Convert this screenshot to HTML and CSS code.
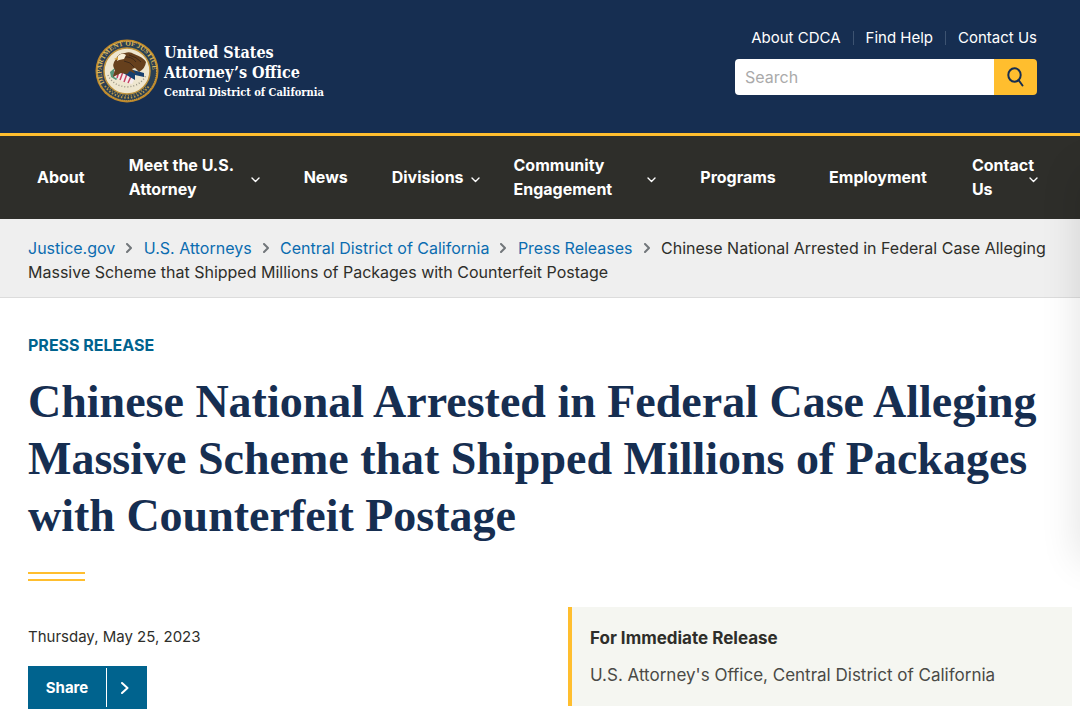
FILE: index.html
```html
<!DOCTYPE html>
<html lang="en">
<head>
  <meta charset="UTF-8">
  <meta name="viewport" content="width=device-width, initial-scale=1">
  <title>Central District of California | Press Release</title>
  <link rel="stylesheet" href="styles.css">
</head>
<body>
  <header class="header">
    <a class="logo" href="#">
      <svg class="seal" viewBox="0 0 64 64" aria-hidden="true">
        <defs>
          <path id="ring-top" d="M9.500 44A25.500 25.500 0 1 1 54.500 44"/>
        </defs>
        <circle cx="32" cy="32" r="31.500" fill="#c08a2b"/>
        <circle cx="32" cy="32" r="29.500" fill="#2b4053" stroke="#dcaa45" stroke-width="1" stroke-dasharray="1 1"/>
        <text class="seal-text"><textPath href="#ring-top">DEPARTMENT OF JUSTICE</textPath></text>
        <path d="M10 47A26.500 26.500 0 0 0 54 47" fill="none" stroke="#b99849" stroke-width="2" stroke-dasharray="1.500 1.800"/>
        <path d="M13 48A25 25 0 0 0 51 48" fill="none" stroke="#ab8b42" stroke-width="1.500" stroke-dasharray="1 1.800"/>
        <circle cx="32" cy="32" r="23" fill="#eee6cf" stroke="#c1943c" stroke-width="1.500"/>
        <path d="M13 36Q18 47 32 48Q46 47 51 36" fill="none" stroke="#9b9686" stroke-width="1.500" stroke-dasharray="1 2"/>
        <path d="M15 33l7-6 6 7-7 7-5-3z" fill="#579579"/>
        <path d="M19 31l9-3 13 9-4 8-8-2-10-5z" fill="#f5eced"/>
        <path d="M21 30l-2 7M25 29l-3 10M29 30l-4 11M33 32l-4 11M37 35l-4 9" stroke="#c5415f" stroke-width="1.500"/>
        <path d="M31 29l18 5 0 4-9-2 0 5-12-7z" fill="#173f6e"/>
        <path d="M21 20q2-6 9-6 5-2 9 1 9 3 12 8-1 7-7 10l-4-4-3 1 4 5-6-3-3 3-6-1-8 4 2-7q-4-5 1-11z" fill="#66401d"/>
        <path d="M28 18q9-1 13 5M29 22q7 1 10 6M34 16q8 2 12 7" fill="none" stroke="#3e2919" stroke-width="1"/>
        <path d="M23 17q4-4 8-1l-2 4-5 1-2 1z" fill="#f7eed7"/>
        <path d="M23 18l-4 2 4 1z" fill="#d9a43b"/>
      </svg>
      <span class="logo-text">
        <span class="logo-title">United States<br>Attorney’s Office</span>
        <span class="logo-district">Central District of California</span>
      </span>
    </a>
    <div class="header-tools">
      <ul class="header-links">
        <li><a href="#">About CDCA</a></li>
        <li><a href="#">Find Help</a></li>
        <li><a href="#">Contact Us</a></li>
      </ul>
      <form class="search">
        <input type="search" placeholder="Search" aria-label="Search">
        <button type="submit" aria-label="Submit search">
          <svg viewBox="0 0 20 20"><ellipse cx="8.500" cy="8" rx="6.200" ry="6.700"/><path d="M12.500 13l4 5.500"/></svg>
        </button>
      </form>
    </div>
  </header>

  <nav class="nav" aria-label="Main">
    <a href="#">About</a>
    <a href="#"><span>Meet the U.S.<br>Attorney</span><svg class="chevron" viewBox="0 0 9 6"><path d="M1 1l3.500 3.500L8 1"/></svg></a>
    <a href="#">News</a>
    <a class="nav-short" href="#"><span>Divisions</span><svg class="chevron" viewBox="0 0 9 6"><path d="M1 1l3.500 3.500L8 1"/></svg></a>
    <a href="#"><span>Community<br>Engagement</span><svg class="chevron" viewBox="0 0 9 6"><path d="M1 1l3.500 3.500L8 1"/></svg></a>
    <a href="#">Programs</a>
    <a href="#">Employment</a>
    <a class="nav-last" href="#"><span>Contact<br>Us</span><svg class="chevron" viewBox="0 0 9 6"><path d="M1 1l3.500 3.500L8 1"/></svg></a>
  </nav>

  <nav class="breadcrumb" aria-label="Breadcrumb">
    <ol>
      <li><a href="#">Justice.gov</a><svg class="separator" viewBox="0 0 6 10"><path d="M1 1l4 4-4 4"/></svg></li>
      <li><a href="#">U.S. Attorneys</a><svg class="separator" viewBox="0 0 6 10"><path d="M1 1l4 4-4 4"/></svg></li>
      <li><a href="#">Central District of California</a><svg class="separator" viewBox="0 0 6 10"><path d="M1 1l4 4-4 4"/></svg></li>
      <li><a href="#">Press Releases</a><svg class="separator" viewBox="0 0 6 10"><path d="M1 1l4 4-4 4"/></svg></li>
      <li>Chinese National Arrested in Federal Case Alleging Massive Scheme that Shipped Millions of Packages with Counterfeit Postage</li>
    </ol>
  </nav>

  <main class="content">
    <p class="kicker">PRESS RELEASE</p>
    <h1>Chinese National Arrested in Federal Case Alleging Massive Scheme that Shipped Millions of Packages with Counterfeit Postage</h1>
    <div class="rule"></div>
    <div class="columns">
      <div class="meta">
        <time datetime="2023-05-25">Thursday, May 25, 2023</time>
        <button class="share" type="button">
          <span class="share-label">Share</span>
          <span class="share-arrow"><svg viewBox="0 0 8 12"><path d="M1 1l5.500 5L1 11"/></svg></span>
        </button>
      </div>
      <aside class="release">
        <h2>For Immediate Release</h2>
        <p>U.S. Attorney's Office, Central District of California</p>
      </aside>
    </div>
  </main>
  <div class="edge-shadow"></div>
</body>
</html>
```
FILE: styles.css
```css
* {
  box-sizing: border-box;
}

body {
  position: relative;
  margin: 0;
  overflow-x: hidden;
  background: #fff;
  color: #2e2e2a;
  font-family: Inter, "Liberation Sans", sans-serif;
  font-size: 16px;
  line-height: 24px;
}

a {
  text-decoration: none;
}

ul, ol, h1, h2, p {
  margin: 0;
  padding: 0;
}

svg {
  fill: none;
  stroke-linecap: round;
  stroke-linejoin: round;
}

/* header */
.header {
  display: flex;
  justify-content: space-between;
  align-items: flex-start;
  min-height: 136px;
  padding: 26px 43px 0 95px;
  background: #162e51;
  border-bottom: 3px solid #ffbe2e;
}

.logo {
  display: flex;
  gap: 5px;
  margin-top: 13px;
  color: #fff;
  font-family: "DejaVu Serif Condensed", "DejaVu Serif", serif;
  font-weight: bold;
}

.seal {
  width: 64px;
  height: 64px;
  stroke-linecap: butt;
}

.seal-text {
  fill: #d8b65c;
  font-family: "Liberation Serif", serif;
  font-size: 7px;
}

.logo-title,
.logo-district {
  display: block;
}

.logo-title {
  margin-top: 4px;
  font-size: 16px;
  line-height: 20px;
}

.logo-district {
  font-size: 11px;
  line-height: 20px;
}

.header-tools {
  width: 302px;
}

.header-links {
  display: flex;
  justify-content: flex-end;
  list-style: none;
  font-size: 15px;
}

.header-links li + li {
  margin-left: 12px;
  padding-left: 13px;
  background: linear-gradient(#3d5371, #3d5371) left center / 1px 14px no-repeat;
}

.header-links a {
  color: #fff;
}

.search {
  display: flex;
  height: 36px;
  margin-top: 9px;
}

.search input {
  flex: 1;
  min-width: 0;
  padding: 0 10px;
  border: 0;
  border-radius: 4px 0 0 4px;
  background: #fff;
  font: inherit;
}

.search input::placeholder {
  color: #aaa;
}

.search button {
  width: 43px;
  padding: 0;
  border: 0;
  border-radius: 0 4px 4px 0;
  background: #ffbe2e;
}

.search svg {
  display: block;
  width: 20px;
  height: 20px;
  margin: 0 auto;
  stroke: #162e51;
  stroke-width: 2;
}

/* main menu */
.nav {
  display: grid;
  grid-template-columns: 92fr 175fr 87fr 122fr 187fr 129fr 143fr 66fr;
  align-items: center;
  min-height: 83px;
  padding: 0 42px 2px 37px;
  background: #2e2e2a;
}

.nav a {
  display: flex;
  align-items: center;
  padding-right: 44px;
  color: #fff;
  font-weight: 700;
  white-space: nowrap;
}

.nav .nav-short {
  padding-right: 34px;
}

.nav .nav-last {
  padding-right: 0;
}

.chevron {
  flex: none;
  width: 9px;
  height: 6px;
  margin: 6px 0 0 auto;
  stroke: #fff;
  stroke-width: 1.4;
}

.nav-last .chevron {
  margin-left: -5px;
}

/* breadcrumb */
.breadcrumb {
  padding: 17px 24px 13px 28px;
  background: #efefef;
  border-bottom: 1px solid #dcdcdc;
}

.breadcrumb ol {
  list-style: none;
}

.breadcrumb li {
  display: inline;
}

.breadcrumb a {
  color: #0b6cb0;
}

.separator {
  width: 6px;
  height: 10px;
  margin: 0 7px 1px 11px;
  stroke: #71767a;
  stroke-width: 2;
}

/* article */
.content {
  padding: 35px 8px 10px 28px;
}

.kicker {
  color: #00638e;
  font-weight: 700;
}

h1 {
  margin-top: 16px;
  color: #162e51;
  font-family: "Liberation Serif", serif;
  font-size: 46px;
  line-height: 57px;
}

.rule {
  width: 57px;
  height: 9px;
  margin-top: 28px;
  border: solid #ffbe2e;
  border-width: 2px 0;
}

.columns {
  display: grid;
  grid-template-columns: 540fr 504fr;
  align-items: start;
  margin-top: 26px;
}

.meta time {
  display: block;
  margin: 18px 0 17px;
  font-size: 15px;
}

.share {
  display: flex;
  width: 119px;
  height: 43px;
  padding: 2px 0;
  border: 0;
  background: #00638e;
  color: #fff;
  font: inherit;
  font-size: 15px;
  font-weight: 700;
}

.share-label,
.share-arrow {
  display: flex;
  align-items: center;
  justify-content: center;
  height: 100%;
}

.share-label {
  width: 78px;
}

.share-arrow {
  width: 36px;
  border-left: 1px solid #fff;
}

.share svg {
  width: 8px;
  height: 12px;
  stroke: #fff;
  stroke-width: 2;
}

.release {
  padding: 19px 18px 18px;
  border-left: 4px solid #ffbe2e;
  background: #f5f6f1;
  font-size: 17px;
}

.release h2 {
  font-size: 17px;
  line-height: 25px;
}

.release p {
  margin-top: 12px;
  color: #4a4a46;
  line-height: 25px;
}

/* shadow of the panel parked past the right edge */
.edge-shadow {
  position: absolute;
  top: 170px;
  left: 100%;
  width: 40px;
  height: 390px;
  box-shadow: 0 0 40px rgba(0, 0, 0, .12);
}
```
